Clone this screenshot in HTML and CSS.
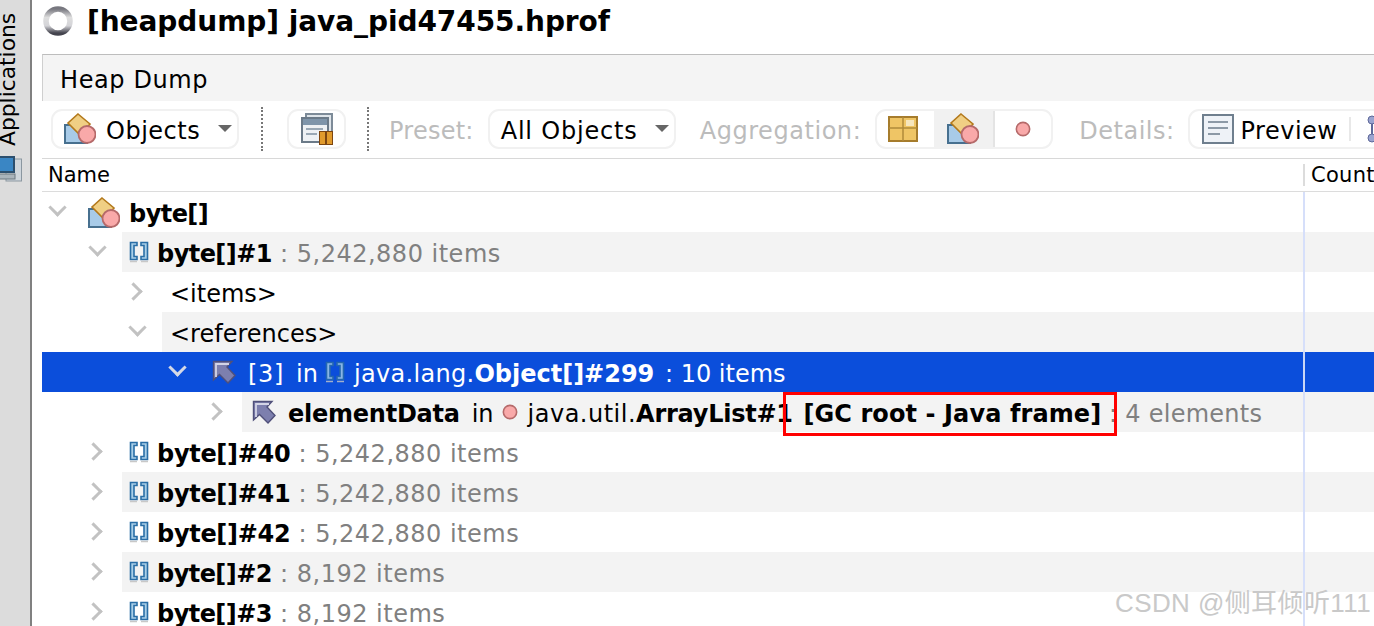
FILE: index.html
```html
<!DOCTYPE html>
<html lang="en">
<head>
  <meta charset="UTF-8">
  <title>[heapdump] java_pid47455.hprof</title>
  <link rel="stylesheet" href="styles.css">
</head>
<body>
  <svg class="defs" width="0" height="0">
    <symbol id="i-class" viewBox="0 0 32 31">
      <rect x="1" y="12" width="22" height="18" fill="#a8cbe8" stroke="#47708f" stroke-width="2"/>
      <path d="M14 1 L26 11 L16 22 L4 10 Z" fill="#f0cf84" stroke="#b3791c" stroke-width="1.6"/>
      <circle cx="23" cy="21.500" r="8.500" fill="#f9a9a9" stroke="#b56a6a" stroke-width="1.800"/>
    </symbol>
    <symbol id="i-array" viewBox="0 0 20 22">
      <path d="M1.500 1.500 H8 V4.500 H5 V15.500 H8 V18.500 H1.500 Z M18.500 1.500 H12 V4.500 H15 V15.500 H12 V18.500 H18.500 Z" fill="#a9cfe8" stroke="#2a6ea6" stroke-width="1.600"/>
      <path d="M1 20.500 H8 M12 20.500 H19" stroke="#c8c8c8" stroke-width="1.500"/>
    </symbol>
    <symbol id="i-ref" viewBox="0 0 24 24">
      <path d="M1.500 1.500 H20 L15 7 L23 15.500 L16 23 L7.500 14.500 L1.500 20 Z" fill="#7d7fae" stroke="#50507a" stroke-width="1.400"/>
      <path d="M4 17 V4 H17" fill="none" stroke="#d3d4e6" stroke-width="1.800"/>
    </symbol>
    <symbol id="i-inst" viewBox="0 0 18 18">
      <circle cx="9" cy="9" r="7.500" fill="#f9a9a9" stroke="#b56a6a" stroke-width="1.800"/>
    </symbol>
  </svg>

  <aside class="side">
    <div class="side-label">Applications</div>
    <svg class="side-icon" width="22" height="28" viewBox="0 0 22 28">
      <rect x="6" y="3" width="15.500" height="22" fill="#cfd6dc" stroke="#8b97a0"/>
      <rect x="-3" y="1" width="17" height="15" fill="#3a86c4" stroke="#2c4f6e" stroke-width="2"/>
      <rect x="-3" y="18" width="18" height="5" fill="#aab4bb" stroke="#6c7880"/>
    </svg>
  </aside>

  <main class="main">
    <div class="title-row">
      <svg class="spinner" width="30" height="30" viewBox="0 0 30 30">
        <defs>
          <linearGradient id="ring" x1="0" y1="0" x2="0" y2="1">
            <stop offset="0" stop-color="#77777f"/>
            <stop offset="0.35" stop-color="#dedede"/>
            <stop offset="0.7" stop-color="#d4d4d8"/>
            <stop offset="1" stop-color="#44444e"/>
          </linearGradient>
        </defs>
        <circle cx="15" cy="15" r="12" fill="none" stroke="url(#ring)" stroke-width="5.500"/>
      </svg>
      <h1 class="title">[heapdump] java_pid47455.hprof</h1>
    </div>

    <div class="tab-bar">Heap Dump</div>

    <div class="toolbar">
      <div class="combo combo-objects">
        <svg width="32" height="31"><use href="#i-class"/></svg>
        <span class="combo-text">Objects</span>
        <span class="caret"></span>
      </div>
      <span class="dots dots-a"></span>
      <div class="combo combo-snap">
        <svg width="32" height="32" viewBox="0 0 32 32">
          <rect x="5" y="1" width="26" height="24" fill="#dfe5ea" stroke="#7d8b98" stroke-width="2"/>
          <rect x="1" y="5" width="26" height="24" fill="#eef1f4" stroke="#6b7a88" stroke-width="2"/>
          <rect x="2" y="6" width="24" height="6" fill="#7f95aa"/>
          <path d="M5 16 H22 M5 21 H16" stroke="#9aa8b5" stroke-width="2"/>
          <rect x="18.500" y="18.500" width="6" height="13" fill="#e09a2c" stroke="#7c4510"/>
          <rect x="25.500" y="18.500" width="6" height="13" fill="#e09a2c" stroke="#7c4510"/>
        </svg>
      </div>
      <span class="dots dots-b"></span>
      <span class="tool-label label-preset">Preset:</span>
      <div class="combo combo-preset">
        <span class="combo-text">All Objects</span>
        <span class="caret"></span>
      </div>
      <span class="tool-label label-agg">Aggregation:</span>
      <div class="combo seg">
        <div class="seg-item seg-first">
          <svg width="30" height="26" viewBox="0 0 30 26">
            <rect x="1" y="1" width="28" height="24" fill="#efc565" stroke="#a67c2c" stroke-width="2"/>
            <path d="M15 1 V25 M1 12 H29" stroke="#b08a3a" stroke-width="1.500"/>
            <rect x="18" y="4" width="8" height="6" fill="#f6e6bd"/>
          </svg>
        </div>
        <div class="seg-item seg-on">
          <svg width="32" height="31"><use href="#i-class"/></svg>
        </div>
        <div class="seg-item">
          <svg width="16" height="16"><use href="#i-inst"/></svg>
        </div>
      </div>
      <span class="tool-label label-details">Details:</span>
      <div class="combo combo-details">
        <svg width="32" height="30" viewBox="0 0 32 30">
          <rect x="1" y="1" width="30" height="28" fill="#eef2f7" stroke="#6f7f8e" stroke-width="2"/>
          <path d="M6 8 H26 M6 14 H26 M6 20 H18" stroke="#8c99a6" stroke-width="2"/>
        </svg>
        <span class="combo-text">Preview</span>
        <span class="vsep"></span>
        <svg width="32" height="30" viewBox="0 0 32 30">
          <circle cx="5" cy="6" r="4" fill="#9aa4d0" stroke="#5e6899"/>
          <circle cx="5" cy="24" r="4" fill="#9aa4d0" stroke="#5e6899"/>
          <path d="M5 10 V20" stroke="#5e6899" stroke-width="2"/>
        </svg>
      </div>
    </div>

    <div class="table-head">
      <span class="head-name">Name</span>
      <span class="head-count">Count</span>
    </div>

    <div class="tree">
      <div class="row level-0">
        <span class="chev down"></span>
        <div class="cell">
          <div class="name">
            <svg class="icon-class" width="32" height="31"><use href="#i-class"/></svg>
            <b class="bn">byte[]</b>
          </div>
          <div class="count"></div>
        </div>
      </div>
      <div class="row level-1 striped">
        <span class="chev down"></span>
        <div class="cell">
          <div class="name">
            <svg class="icon-array" width="20" height="22"><use href="#i-array"/></svg>
            <b class="bn">byte[]#1</b><span class="dim">&nbsp;: 5,242,880 items</span>
          </div>
          <div class="count"></div>
        </div>
      </div>
      <div class="row level-2">
        <span class="chev right"></span>
        <div class="cell">
          <div class="name"><span>&lt;items&gt;</span></div>
          <div class="count"></div>
        </div>
      </div>
      <div class="row level-2 striped">
        <span class="chev down"></span>
        <div class="cell">
          <div class="name"><span>&lt;references&gt;</span></div>
          <div class="count"></div>
        </div>
      </div>
      <div class="row level-3 selected">
        <span class="chev down"></span>
        <div class="cell">
          <div class="name">
            <svg class="icon-ref" width="24" height="24"><use href="#i-ref"/></svg>
            <span class="idx">[3]</span>
            <span class="word">in</span>
            <svg class="icon-array small" width="20" height="22"><use href="#i-array"/></svg>
            <span><span class="pkg">java.lang.</span><b>Object[]#299</b><span class="tail">&nbsp;: 10 items</span></span>
          </div>
          <div class="count"></div>
        </div>
      </div>
      <div class="row level-4 striped">
        <span class="chev right"></span>
        <div class="cell">
          <div class="name">
            <svg class="icon-ref" width="24" height="24"><use href="#i-ref"/></svg>
            <b class="field">elementData</b>
            <span class="word">in</span>
            <svg class="icon-inst" width="16" height="16"><use href="#i-inst"/></svg>
            <span><span class="pkg">java.util.</span><b class="field">ArrayList#1</b> <b class="gc">[GC root - Java frame]</b><span class="dim elems">&nbsp;: 4 elements</span></span>
          </div>
          <div class="count"></div>
        </div>
      </div>
      <div class="row level-1">
        <span class="chev right"></span>
        <div class="cell">
          <div class="name">
            <svg class="icon-array" width="20" height="22"><use href="#i-array"/></svg>
            <b class="bn wide">byte[]#40</b><span class="dim">&nbsp;: 5,242,880 items</span>
          </div>
          <div class="count"></div>
        </div>
      </div>
      <div class="row level-1 striped">
        <span class="chev right"></span>
        <div class="cell">
          <div class="name">
            <svg class="icon-array" width="20" height="22"><use href="#i-array"/></svg>
            <b class="bn wide">byte[]#41</b><span class="dim">&nbsp;: 5,242,880 items</span>
          </div>
          <div class="count"></div>
        </div>
      </div>
      <div class="row level-1">
        <span class="chev right"></span>
        <div class="cell">
          <div class="name">
            <svg class="icon-array" width="20" height="22"><use href="#i-array"/></svg>
            <b class="bn wide">byte[]#42</b><span class="dim">&nbsp;: 5,242,880 items</span>
          </div>
          <div class="count"></div>
        </div>
      </div>
      <div class="row level-1 striped">
        <span class="chev right"></span>
        <div class="cell">
          <div class="name">
            <svg class="icon-array" width="20" height="22"><use href="#i-array"/></svg>
            <b class="bn">byte[]#2</b><span class="dim">&nbsp;: 8,192 items</span>
          </div>
          <div class="count"></div>
        </div>
      </div>
      <div class="row level-1">
        <span class="chev right"></span>
        <div class="cell">
          <div class="name">
            <svg class="icon-array" width="20" height="22"><use href="#i-array"/></svg>
            <b class="bn">byte[]#3</b><span class="dim">&nbsp;: 8,192 items</span>
          </div>
          <div class="count"></div>
        </div>
      </div>
    </div>
  </main>

  <div class="red-box"></div>
  <div class="watermark">CSDN @侧耳倾听111</div>
</body>
</html>
```

FILE: styles.css
```css
html, body {
  height: 100%;
  margin: 0;
  overflow: hidden;
}
body {
  display: flex;
  position: relative;
  background: #fff;
  color: #000;
  font-family: "DejaVu Sans", sans-serif;
  font-size: 24px;
}
.defs { position: absolute; }

/* left dock */
.side {
  width: 30px;
  flex: none;
  background: #dcdcdc;
  border-right: 2px solid #808080;
  overflow: hidden;
}
.side-label {
  writing-mode: vertical-rl;
  transform: rotate(180deg);
  height: 146px;
  width: 16px;
  line-height: 16px;
  font-size: 21.8px;
  white-space: nowrap;
}
.side-icon { display: block; margin-top: 10px; }

.main {
  flex: 1;
  min-width: 0;
  padding-left: 10px;
}

.title-row {
  display: flex;
  align-items: center;
  height: 54px;
}
.spinner { margin: -12px 14px 0 1px; flex: none; }
.title {
  margin: -12px 0 0;
  font-size: 28px;
  letter-spacing: -0.07px;
  font-weight: bold;
  white-space: nowrap;
}

.tab-bar {
  height: 46px;
  line-height: 50px;
  padding-left: 17px;
  letter-spacing: 0.6px;
  background: #f4f4f4;
  border-top: 1px solid #bdbdbd;
  border-left: 1px solid #cfcfcf;
}

/* toolbar */
.toolbar {
  display: flex;
  align-items: center;
  height: 55px;
  padding: 0 0 2px 9px;
  border-bottom: 1px solid #d8d8d8;
  white-space: nowrap;
  overflow: hidden;
  letter-spacing: 0.5px;
}
.combo {
  display: flex;
  align-items: center;
  flex: none;
  box-sizing: border-box;
  height: 40px;
  border: 2px solid #f1f1f1;
  border-radius: 11px;
}
.combo-text, .tool-label { padding-top: 4px; }
.combo-objects { width: 188px; padding-left: 11px; }
.combo-objects .combo-text { margin-left: 10px; }
.combo-snap { width: 59px; justify-content: center; }
.combo-preset { width: 188px; padding-left: 11px; }
.combo-preset .combo-text { letter-spacing: 0.8px; }
.caret {
  margin-left: auto;
  margin-right: 5px;
  width: 0;
  height: 0;
  border-left: 7px solid transparent;
  border-right: 7px solid transparent;
  border-top: 7px solid #666;
}
.dots {
  flex: none;
  height: 44px;
  border-left: 2px dotted #777;
}
.dots-a { margin: 0 24px 0 22px; }
.dots-b { margin: 0 20px 0 21px; }
.tool-label { color: #bcbcbc; flex: none; }
.label-preset { margin-right: 14px; letter-spacing: 0.25px; }
.label-agg { margin: 0 14px 0 24px; letter-spacing: 0.55px; }
.label-details { margin: 0 13px 0 26px; }

.seg { width: 178px; overflow: hidden; }
.seg-item {
  width: 58px;
  height: 100%;
  display: flex;
  align-items: center;
  justify-content: center;
}
.seg-first svg { margin-right: 5px; }
.seg-on { width: 60px; background: #f1f1f1; border-right: 2px solid #e4e4e4; }

.combo-details { padding-left: 12px; width: 400px; }
.combo-details .combo-text { margin-left: 7px; }
.vsep { width: 2px; height: 24px; background: #e8e8e8; margin: 0 16px 0 12px; }

/* table */
.table-head {
  display: flex;
  align-items: center;
  height: 32px;
  border-bottom: 1px solid #dcdcdc;
  font-size: 21px;
}
.head-name { flex: 1; padding-left: 6px; }
.head-count {
  width: 63px;
  height: 22px;
  line-height: 22px;
  padding-left: 6px;
  border-left: 2px solid #dcdcdc;
  white-space: nowrap;
  letter-spacing: 0.3px;
}

.row {
  display: flex;
  height: 40px;
  line-height: 40px;
  white-space: nowrap;
}
.level-0 { padding-left: 0; }
.level-1 { padding-left: 40px; }
.level-2 { padding-left: 80px; }
.level-3 { padding-left: 120px; }
.level-4 { padding-left: 160px; }

.chev {
  width: 40px;
  flex: none;
  position: relative;
}
.chev::before {
  content: "";
  position: absolute;
  width: 10px;
  height: 10px;
  border-right: 3px solid #c2c2c2;
  border-bottom: 3px solid #c2c2c2;
}
.chev.down::before { transform: rotate(45deg); top: 9px; left: 9px; }
.chev.right::before { transform: rotate(-45deg); top: 13px; left: 5px; }

.cell { flex: 1; display: flex; min-width: 0; }
.name {
  flex: 1;
  min-width: 0;
  display: flex;
  align-items: center;
  overflow: hidden;
}
.name b, .name span { flex: none; }
.name > b, .name > span { padding-top: 4px; line-height: 36px; }
.count {
  flex: none;
  width: 69px;
  border-left: 2px solid #d6dffa;
}
.striped .cell { background: #f3f3f3; }
.selected { background: #0b4edb; color: #fff; }
.selected .count { border-left-color: #c9d6f5; }
.selected .chev::before { border-color: #d5d9e6; }

.level-0 .name { padding-left: 6px; }
.level-1 .name { padding-left: 7px; }
.level-2 .name { padding-left: 8px; }
.level-3 .name { padding-left: 10px; }
.level-4 .name { padding-left: 10px; }

.bn { letter-spacing: -0.55px; }
.bn.wide { letter-spacing: -0.3px; }
.field { letter-spacing: -0.25px; }
.gc { margin-left: 3px; letter-spacing: 0.1px; }
.pkg { letter-spacing: 0.5px; }
.selected .pkg { letter-spacing: 0.3px; }
.idx { letter-spacing: 0.7px; }
.tail { margin-left: 3px; }

.icon-class { margin-right: 9px; flex: none; }
.icon-array { margin-right: 8px; flex: none; }
.icon-array.small { margin: 0 9px 0 7px; opacity: 0.8; }
.icon-ref { margin-right: 12px; flex: none; }
.icon-inst { margin: 0 10px 0 8px; flex: none; }
.word { margin-left: 12px; }
.dim { color: #808080; letter-spacing: 0.5px; }
.dim.elems { letter-spacing: 0.25px; }

/* annotation drawn on top of the screenshot */
.red-box {
  position: absolute;
  left: 783px;
  top: 392px;
  width: 328px;
  height: 38px;
  border: 3px solid #f00;
}
.watermark {
  position: absolute;
  left: 1115px;
  top: 582px;
  font-family: "Liberation Sans", "Noto Sans CJK SC", sans-serif;
  font-size: 26px;
  letter-spacing: 0.4px;
  color: #c9c9c9;
  white-space: nowrap;
}
```
